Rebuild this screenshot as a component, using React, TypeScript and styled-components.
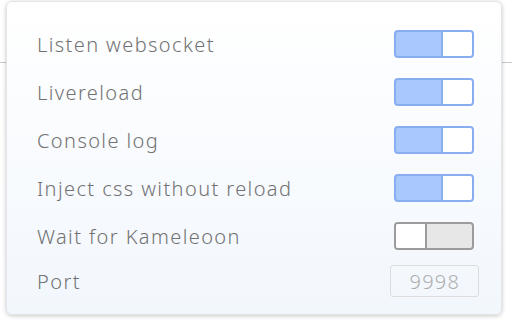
import React, { useState } from 'react'
import styled, { createGlobalStyle } from 'styled-components'

const GlobalStyle = createGlobalStyle`
  html, body {
    margin: 0;
    padding: 0;
    background: #ffffff;
  }
  body {
    font-family: 'Noto Sans', 'DejaVu Sans', sans-serif;
  }
`

interface Option {
  label: string
  on: boolean
}

const initialOptions: Option[] = [
  { label: 'Listen websocket', on: true },
  { label: 'Livereload', on: true },
  { label: 'Console log', on: true },
  { label: 'Inject css without reload', on: true },
  { label: 'Wait for Kameleoon', on: false },
]

const App = () => {
  const [options, setOptions] = useState<Option[]>(initialOptions)
  const [port, setPort] = useState<string>('')

  const toggle = (index: number) => {
    setOptions(options.map((o, i) => (i === index ? { ...o, on: !o.on } : o)))
  }

  return (
    <>
      <GlobalStyle />
      <Page>
        <Card>
          {options.map((option, i) => (
            <Row key={option.label}>
              <Label>{option.label}</Label>
              <Switch on={option.on} onClick={() => toggle(i)}>
                <Knob on={option.on} />
              </Switch>
            </Row>
          ))}
          <PortRow>
            <Label>Port</Label>
            <PortInput value={port} onChange={(e) => setPort(e.target.value)} placeholder="9998" />
          </PortRow>
        </Card>
      </Page>
    </>
  )
}

export default App

const Page = styled.div`
  width: 512px;
  height: 320px;
  overflow: hidden;
  padding-top: 1px;
  box-sizing: border-box;
  background: linear-gradient(#fff 0, #fff 62px, #c9c9c9 62px, #c9c9c9 63px, #fff 63px);
`

const Card = styled.div`
  box-sizing: border-box;
  width: 496px;
  height: 314px;
  margin-left: 6px;
  padding: 18px 27px 0 30px;
  display: flex;
  flex-direction: column;
  border: 1px solid #e2e4e8;
  border-radius: 6px;
  background: linear-gradient(180deg, #ffffff 0%, #f2f7fd 100%);
  box-shadow: 0 1px 4px rgba(0, 0, 0, 0.22);
`

const Row = styled.div`
  display: flex;
  align-items: center;
  justify-content: space-between;
  height: 48px;
`

const PortRow = styled(Row)`
  height: 42px;
  margin-right: -5px;
`

const Label = styled.span`
  color: #727272;
  font-size: 20px;
  font-weight: 300;
  letter-spacing: 1.4px;
`

const Switch = styled.div<{ on: boolean }>`
  box-sizing: border-box;
  display: flex;
  justify-content: ${(p) => (p.on ? 'flex-end' : 'flex-start')};
  width: 80px;
  height: 28px;
  border-radius: 4px;
  overflow: hidden;
  cursor: pointer;
  border: 2px solid ${(p) => (p.on ? '#88aef0' : '#9b9b9b')};
  background: ${(p) => (p.on ? '#a9c8fb' : '#e7e7e7')};
`

const Knob = styled.div<{ on: boolean }>`
  box-sizing: border-box;
  width: 31px;
  height: 100%;
  background: #ffffff;
  border-left: ${(p) => (p.on ? '2px solid #88aef0' : 'none')};
  border-right: ${(p) => (p.on ? 'none' : '2px solid #9b9b9b')};
`

const PortInput = styled.input`
  box-sizing: border-box;
  width: 89px;
  height: 32px;
  border: 1.5px solid #dcdcdc;
  border-radius: 3px;
  background: transparent;
  padding: 0 18px 0 8px;
  text-align: right;
  font-family: 'Noto Sans', 'DejaVu Sans', sans-serif;
  font-size: 20px;
  font-weight: 300;
  letter-spacing: 1.2px;
  color: #999;
  outline: none;
  &::placeholder {
    color: #acacac;
  }
`
